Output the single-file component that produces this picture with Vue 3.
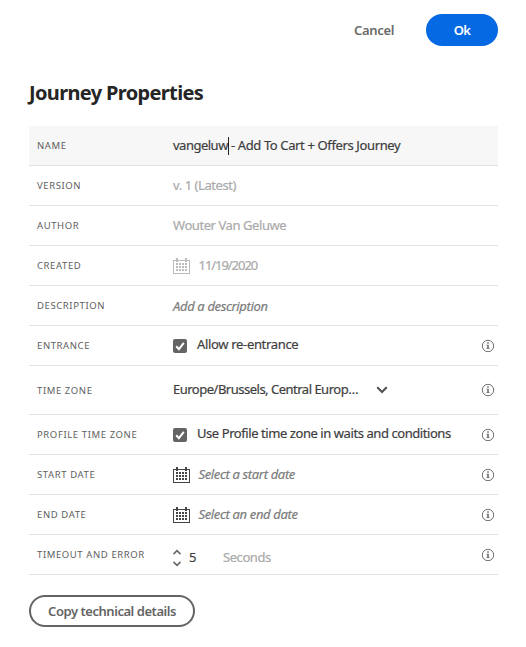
<script setup>
import { ref } from 'vue'

const rows = ref([
  { key: 'name', label: 'NAME', type: 'name', before: 'vangeluw', after: '- Add To Cart + Offers Journey' },
  { key: 'version', label: 'VERSION', type: 'readonly', value: 'v. 1 (Latest)' },
  { key: 'author', label: 'AUTHOR', type: 'readonly', value: 'Wouter Van Geluwe' },
  { key: 'created', label: 'CREATED', type: 'date', value: '11/19/2020', muted: true },
  { key: 'description', label: 'DESCRIPTION', type: 'placeholder', value: 'Add a description' },
  { key: 'entrance', label: 'ENTRANCE', type: 'check', value: 'Allow re-entrance', info: true },
  { key: 'timezone', label: 'TIME ZONE', type: 'select', value: 'Europe/Brussels, Central Europ…', info: true },
  { key: 'profile', label: 'PROFILE TIME ZONE', type: 'check', value: 'Use Profile time zone in waits and conditions', info: true },
  { key: 'start', label: 'START DATE', type: 'date', value: 'Select a start date', info: true },
  { key: 'end', label: 'END DATE', type: 'date', value: 'Select an end date', info: true },
  { key: 'timeout', label: 'TIMEOUT AND ERROR', type: 'stepper', value: '5', unit: 'Seconds', info: true },
])
const dotsX = [3, 6, 9, 12]
const dotsY = [5, 8, 11]
</script>

<template>
  <main class="panel">
    <header class="actions">
      <button class="cancel">Cancel</button>
      <button class="ok">Ok</button>
    </header>
    <h1 class="title">Journey Properties</h1>
    <section class="rows">
      <div v-for="row in rows" :key="row.key" class="row" :class="['row-' + row.key, 'type-' + row.type]">
        <span class="label">{{ row.label }}</span>
        <div class="value">
          <template v-if="row.type === 'name'">
            <span class="txt before">{{ row.before }}</span><span class="caret"></span><span class="txt after">{{ row.after }}</span>
          </template>
          <template v-else-if="row.type === 'date'">
            <svg class="calendar" :class="{ muted: row.muted }" width="17" height="16" viewBox="0 0 17 16" shape-rendering="crispEdges">
              <path d="M0 2h17v14H0zM1 3v12h15V3z" fill-rule="evenodd" />
              <path d="M3 0h2v4H3zM12 0h2v4h-2z" />
              <template v-for="y in dotsY" :key="y">
                <rect v-for="x in dotsX" :key="x" :x="x" :y="y" width="2" height="2" />
              </template>
            </svg>
            <span class="txt" :class="row.muted ? 'readonly' : 'placeholder'">{{ row.value }}</span>
          </template>
          <template v-else-if="row.type === 'check'">
            <svg class="checkbox" width="14" height="14" viewBox="0 0 14 14">
              <rect width="14" height="14" rx="2" />
              <path d="M3.2 7.2l2.7 2.9 4.9-6.2" />
            </svg>
            <span class="txt">{{ row.value }}</span>
          </template>
          <template v-else-if="row.type === 'select'">
            <span class="txt">{{ row.value }}</span>
            <svg class="chevron" width="12" height="8" viewBox="0 0 12 8"><path d="M1.8 1.8L6 6l4.200-4.200" /></svg>
          </template>
          <template v-else-if="row.type === 'stepper'">
            <svg class="steps" width="8" height="18" viewBox="0 0 8 18"><path d="M1 4.600L4 1.700 7 4.600M1 13.400L4 16.300 7 13.400" /></svg>
            <span class="txt">{{ row.value }}</span>
            <span class="txt unit">{{ row.unit }}</span>
          </template>
          <span v-else class="txt" :class="row.type">{{ row.value }}</span>
        </div>
        <svg v-if="row.info" class="info" width="14" height="14" viewBox="0 0 14 14">
          <circle cx="7" cy="7" r="5.700" />
          <path d="M6.200 3.200h1.600v1.500H6.200zM5.500 5.700h2.300v3.600h.8v.8H5.400v-.8h.8V6.500h-.7z" />
        </svg>
      </div>
    </section>
    <button class="copy">Copy technical details</button>
  </main>
</template>

<style>
body {
  background: #fff;
}
</style>

<style scoped>
.panel {
  box-sizing: border-box;
  height: 647px;
  padding: 14px 28px 0 29px;
  font-family: "Noto Sans", "Open Sans", sans-serif;
  color: #3e3e3e;
}
button {
  font-family: inherit;
  font-size: 13px;
  font-weight: 600;
  line-height: 18px;
  padding: 0;
  border: 0;
  background: none;
  white-space: nowrap;
}
.actions {
  display: flex;
  justify-content: flex-end;
  align-items: center;
  gap: 32px;
  height: 32px;
}
.cancel {
  color: #6a6a6a;
  letter-spacing: -0.35px;
}
.ok {
  width: 72px;
  height: 32px;
  border-radius: 16px;
  background: #0469e3;
  color: #fff;
  letter-spacing: -0.6px;
}
.title {
  margin: 32px 0 18px;
  font-size: 20px;
  line-height: 30px;
  font-weight: 700;
  letter-spacing: -0.65px;
  color: #252525;
}
.row {
  box-sizing: border-box;
  display: grid;
  grid-template-columns: 136px 1fr 14px;
  align-items: center;
  height: 40px;
  padding: 0 3px 0 8px;
  border-bottom: 1px solid #e2e2e2;
}
.row-name {
  background: #f7f7f7;
}
.row-timezone {
  height: 49px;
}
.label {
  font-size: 9.5px;
  line-height: 14px;
  letter-spacing: 0.6px;
  padding-top: 1px;
  color: #5e5e5e;
  white-space: nowrap;
}
.value {
  display: flex;
  align-items: center;
  white-space: nowrap;
}
.txt {
  font-size: 13px;
  line-height: 18px;
  letter-spacing: -0.43px;
  padding-bottom: 2px;
  -webkit-text-stroke: 0.2px currentColor;
}
.readonly,
.unit {
  color: #aaa;
}
.row-version .txt {
  letter-spacing: -0.43px;
}
.row-created .txt {
  letter-spacing: -1.05px;
}
.placeholder {
  color: #7c7c7c;
  font-style: italic;
  letter-spacing: -0.35px;
}
.row-description .txt {
  padding-bottom: 0;
}
.type-check .txt {
  padding-bottom: 3px;
}
.row-entrance .txt {
  letter-spacing: -0.33px;
}
.row-timezone .txt {
  letter-spacing: -0.5px;
}
.row-name .before {
  letter-spacing: -0.5px;
}
.row-name .after {
  letter-spacing: -0.37px;
}
.caret {
  width: 1px;
  height: 18px;
  margin-right: 2px;
  background: #222;
}
.calendar {
  fill: #444;
  margin-right: 8.5px;
}
.calendar.muted {
  fill: #bcbcbc;
}
.checkbox {
  margin-right: 10px;
}
.checkbox rect {
  fill: #646464;
}
.checkbox path {
  fill: none;
  stroke: #fff;
  stroke-width: 2;
}
.chevron {
  margin-left: 18px;
}
.chevron path,
.steps path {
  fill: none;
  stroke: #505050;
  stroke-width: 2;
  stroke-linecap: round;
}
.steps {
  margin-right: 8px;
}
.steps path {
  stroke: #686868;
  stroke-width: 1.6;
}
.unit {
  margin-left: 27px;
}
.type-stepper .value {
  padding-top: 6px;
}
.info circle {
  fill: none;
  stroke: #707070;
}
.info path {
  fill: #707070;
}
.copy {
  box-sizing: border-box;
  width: 166px;
  height: 32px;
  margin-top: 20px;
  border: 2px solid #646464;
  border-radius: 16px;
  color: #646464;
  letter-spacing: -0.46px;
}
</style>
